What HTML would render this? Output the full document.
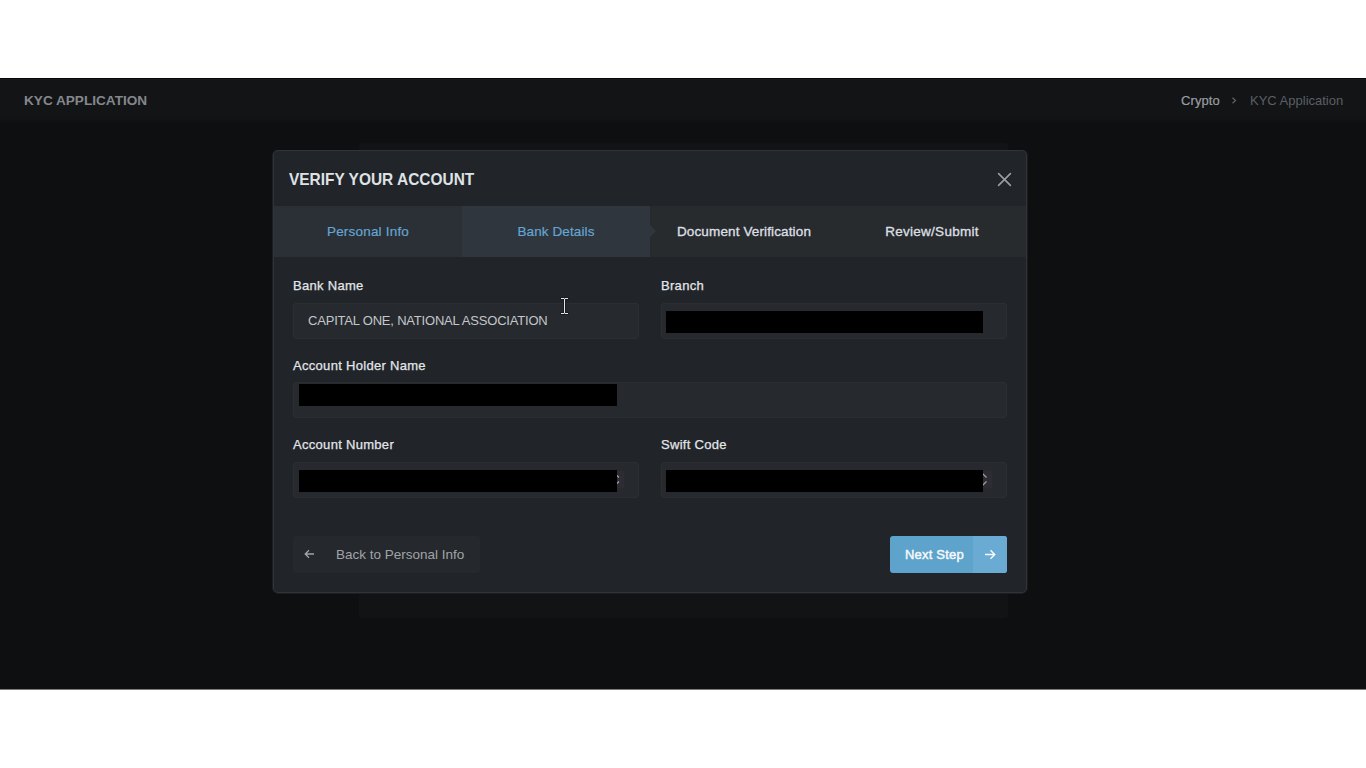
<!DOCTYPE html>
<html><head><meta charset="utf-8">
<style>
*{box-sizing:border-box;margin:0;padding:0}
html,body{width:1366px;height:768px;background:#fff;overflow:hidden;font-family:"Liberation Sans",sans-serif}
.app{position:absolute;left:0;top:78px;width:1366px;height:612px;background:#0e0f11}
.topline{position:absolute;left:0;top:0;width:1366px;height:1px;background:#05080b}
.hdr{position:absolute;left:0;top:1px;width:1366px;height:43px;background:#131416}
.hdr:before{content:"";position:absolute;left:0;top:0;width:1366px;height:1px;background:#17191c}
.sh{position:absolute;left:0;width:1366px;height:1px}
.hdr .t{position:absolute;left:24px;top:14px;font-size:13.6px;font-weight:700;color:#84888d;white-space:nowrap;line-height:16px}
.bc{position:absolute;top:14px;font-size:13px;line-height:16px;white-space:nowrap}
.card{position:absolute;left:359px;top:65px;width:649px;height:475px;background:#121315;border-radius:3px}
.modal{position:absolute;left:273px;top:150px;width:754px;height:443px;background:#212429;border:1px solid #30343a;border-radius:5px;overflow:hidden;box-shadow:-1px 0 0 #1b1e22,1px 0 0 #191b1f,0 1px 0 #1b1d21}
.mt{position:absolute;left:15px;top:19px;font-size:16.5px;font-weight:700;color:#dfe2e5;white-space:nowrap;line-height:18px;transform:scaleX(0.937);transform-origin:0 0}
.close{position:absolute;left:723px;top:21px;width:15px;height:15px}
.tabs{position:absolute;left:0;top:55px;width:752px;height:51px;background:#272b2e}
.tab{position:absolute;top:0;height:51px;font-size:13.5px;line-height:52px;text-align:center;white-space:nowrap}
.t1{left:0;width:188px;background:#2b2f36;color:#64a6d2;letter-spacing:0.2px;-webkit-text-stroke:0.2px #64a6d2}
.t2{left:188px;width:188px;background:#2f363e;color:#64a6d2;letter-spacing:0.1px;-webkit-text-stroke:0.2px #64a6d2}
.t2:after{content:"";position:absolute;right:-6px;top:19px;border-left:6px solid #2f363e;border-top:6px solid transparent;border-bottom:6px solid transparent}
.t3{left:376px;width:188px;color:#dcdfe2;letter-spacing:0.13px;-webkit-text-stroke:0.35px #dcdfe2}
.t4{left:564px;width:188px;color:#dcdfe2;letter-spacing:0.25px;-webkit-text-stroke:0.35px #dcdfe2}
.lbl{position:absolute;font-size:13px;line-height:16px;color:#e3e6e9;white-space:nowrap;-webkit-text-stroke:0.25px #e3e6e9;letter-spacing:0.3px}
.inp{position:absolute;height:36px;background:#26292d;border:1px solid #2b2f32;border-radius:3px;box-shadow:-1px 0 0 #232629}
.red{position:absolute;background:#000}
.val{position:absolute;font-size:13px;line-height:16px;color:#c3c7cb;white-space:nowrap;letter-spacing:-0.2px}
.spin{position:absolute;width:15px;height:17px;background:#2d2c33}
.btnb{position:absolute;left:19px;top:385px;width:187px;height:37px;background:#25282c;border-radius:3px}
.btnn{position:absolute;left:616px;top:385px;width:117px;height:37px;background:#5ea3cc;border-radius:3px;overflow:hidden}
</style></head><body>
<div class="app">
  <div class="topline"></div>
  <div class="hdr">
    <div class="t">KYC APPLICATION</div>
    <div class="bc" style="left:1181px;color:#9a9ea3;-webkit-text-stroke:0.2px #9a9ea3;letter-spacing:0.1px">Crypto</div>
    <svg style="position:absolute;left:1231px;top:18px" width="7" height="7" viewBox="0 0 7 7"><path d="M1.5 0.8L4.5 3.5L1.5 6.2" stroke="#5f6469" stroke-width="1.2" fill="none"/></svg>
    <div class="bc" style="left:1250px;color:#5a5f65">KYC Application</div>
  </div>
  <div class="sh" style="top:39px;background:#131416"></div>
  <div class="sh" style="top:40px;background:#121315"></div>
  <div class="sh" style="top:41px;background:#121314"></div>
  <div class="sh" style="top:42px;background:#111214"></div>
  <div class="sh" style="top:43px;background:#101113"></div>
  <div class="sh" style="top:44px;background:#0f1012"></div>
  <div class="card"></div>
  <div class="sh" style="top:611px;background:#7a7a7b"></div>
</div>
<div class="modal">
  <div class="mt">VERIFY YOUR ACCOUNT</div>
  <svg class="close" viewBox="0 0 15 15"><path d="M1.6 1.6L13.4 13.4M13.4 1.6L1.6 13.4" stroke="#9b9fa3" stroke-width="1.6" fill="none" stroke-linecap="round"/></svg>
  <div class="tabs">
    <div class="tab t1">Personal Info</div>
    <div class="tab t2">Bank Details</div>
    <div class="tab t3">Document Verification</div>
    <div class="tab t4">Review/Submit</div>
  </div>

  <div class="lbl" style="left:19px;top:127px">Bank Name</div>
  <div class="inp" style="left:19px;top:152px;width:346px"></div>
  <div class="val" style="left:34px;top:162px">CAPITAL ONE, NATIONAL ASSOCIATION</div>
  <div class="lbl" style="left:387px;top:127px">Branch</div>
  <div class="inp" style="left:387px;top:152px;width:346px"></div>
  <div class="red" style="left:392px;top:160px;width:317px;height:22px"></div>

  <div class="lbl" style="left:19px;top:207px">Account Holder Name</div>
  <div class="inp" style="left:19px;top:231px;width:714px"></div>
  <div class="red" style="left:25px;top:233px;width:318px;height:22px"></div>

  <div class="lbl" style="left:19px;top:286px">Account Number</div>
  <div class="inp" style="left:19px;top:311px;width:346px"></div>
  <div class="spin" style="left:335px;top:320px"></div>
  <svg style="position:absolute;left:335px;top:320px" width="15" height="17" viewBox="0 0 15 17"><path d="M3 6.5L6.5 3L10 6.5M3 10.5L6.5 14L10 10.5" stroke="#a3a3ab" stroke-width="1.2" fill="none"/></svg>
  <div class="red" style="left:25px;top:319px;width:318px;height:22px"></div>
  <div class="lbl" style="left:387px;top:286px">Swift Code</div>
  <div class="inp" style="left:387px;top:311px;width:346px"></div>
  <div class="spin" style="left:703px;top:320px"></div>
  <svg style="position:absolute;left:703px;top:320px" width="15" height="17" viewBox="0 0 15 17"><path d="M2.5 6.5L6 3L9.5 6.5M2.5 10.5L6 14L9.5 10.5" stroke="#a3a3ab" stroke-width="1.2" fill="none"/></svg>
  <div class="red" style="left:392px;top:319px;width:317px;height:22px"></div>

  <div class="btnb">
    <svg style="position:absolute;left:11px;top:13px" width="11" height="10" viewBox="0 0 11 10"><path d="M10 5H1.5M5 1.2L1.2 5L5 8.8" stroke="#a0a4a8" stroke-width="1.3" fill="none"/></svg>
    <div style="position:absolute;left:43px;top:11px;font-size:13.5px;line-height:16px;color:#a0a4a8;white-space:nowrap">Back to Personal Info</div>
  </div>
  <div class="btnn">
    <div style="position:absolute;left:83px;top:0;width:34px;height:37px;background:#6aabd3"></div>
    <div style="position:absolute;left:15px;top:11px;font-size:13px;line-height:16px;color:#f6f9fb;font-weight:400;-webkit-text-stroke:0.45px #f6f9fb;white-space:nowrap;letter-spacing:0.2px">Next Step</div>
    <svg style="position:absolute;left:94px;top:13px" width="12" height="11" viewBox="0 0 12 11"><path d="M1 5.5H10.5M6.5 1.3L10.7 5.5L6.5 9.7" stroke="#f4f8fb" stroke-width="1.5" fill="none"/></svg>
  </div>
  <svg style="position:absolute;left:285px;top:145px" width="11" height="20" viewBox="0 0 11 20"><path d="M1.5 2.5H9.5M5.5 2.5V17.5M1.5 17.5H9.5" stroke="#15171a" stroke-width="2.4" fill="none"/><path d="M2 2.5H5M6 2.5H9M5.5 2.5V17.5M2 17.5H5M6 17.5H9" stroke="#e6e6e6" stroke-width="1" fill="none"/></svg>
</div>
</body></html>
